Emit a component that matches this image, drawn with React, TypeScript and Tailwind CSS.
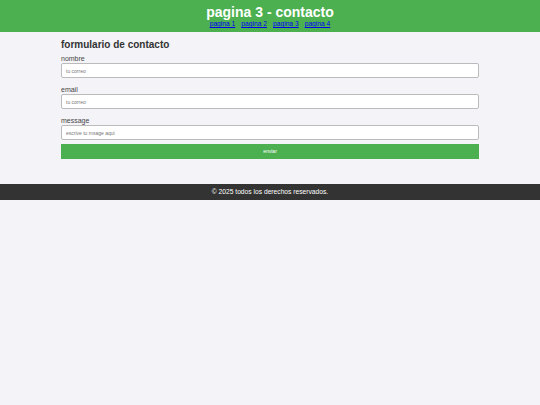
import React from 'react';

const links = ['pagina 1', 'pagina 2', 'pagina 3', 'pagina 4'];

const fields = [
    { label: 'nombre', placeholder: 'tu correo' },
    { label: 'email', placeholder: 'tu correo' },
    { label: 'message', placeholder: 'escrive tu msage aqui' },
];

export default function App() {
    return (
        <div className="min-h-[405px] bg-[#f4f4f8] font-['Liberation_Sans',Arial,sans-serif] text-[#333]">
            {/* Header */}
            <header className="h-[32px] bg-[#4caf50] flex flex-col items-center pt-[4px] text-white">
                <h1 className="text-[14px] leading-[16px] font-bold">pagina 3 - contacto</h1>
                <nav className="flex gap-[6px] text-[6.7px] leading-[8px]">
                    {links.map((l) => (
                        <a key={l} href="#" className="text-[#0000ee] underline">
                            {l}
                        </a>
                    ))}
                </nav>
            </header>

            {/* Form */}
            <main className="w-[418px] mx-auto pt-[7px] pb-[25px]">
                <h2 className="text-[10px] leading-[12px] font-bold">formulario de contacto</h2>
                <form className="flex flex-col mt-[4px]" onSubmit={(e) => e.preventDefault()}>
                    {fields.map((f, i) => (
                        <div key={f.label} className={i < fields.length - 1 ? 'flex flex-col mb-[8px]' : 'flex flex-col'}>
                            <label className="text-[7px] leading-[8px] text-[#444]">{f.label}</label>
                            <input
                                placeholder={f.placeholder}
                                className="h-[15px] bg-white border border-[#bbb] rounded-[2px] px-[4px] text-[5px] placeholder:text-[#777] outline-none"
                            />
                        </div>
                    ))}
                    <button
                        type="submit"
                        className="mt-[4px] h-[15px] bg-[#4caf50] text-white text-[5px] leading-[15px]"
                    >
                        enviar
                    </button>
                </form>
            </main>

            {/* Footer */}
            <footer className="h-[16px] bg-[#333] text-white text-[6.7px] flex items-center justify-center">
                © 2025 todos los derechos reservados.
            </footer>
        </div>
    );
}
